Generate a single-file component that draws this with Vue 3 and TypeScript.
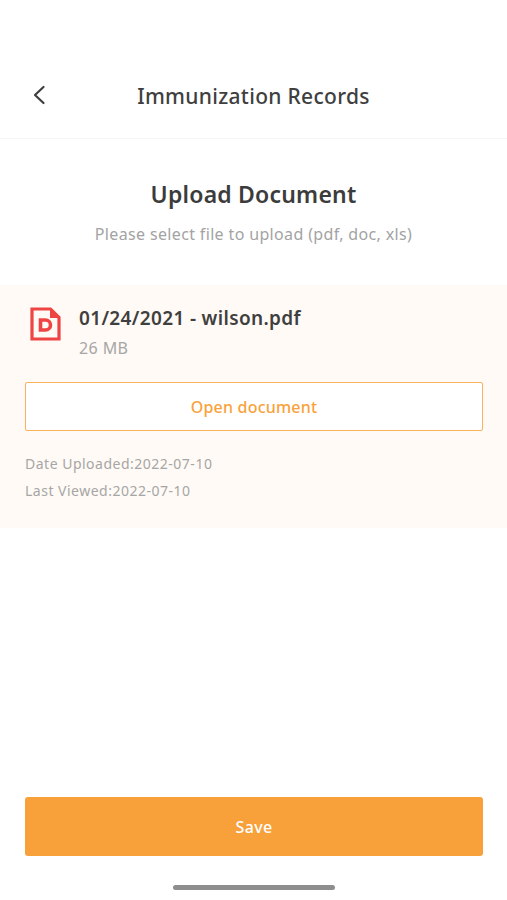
<script setup lang="ts">
const fileName = '01/24/2021 - wilson.pdf';
const fileSize = '26 MB';
const uploaded = '2022-07-10';
const viewed = '2022-07-10';
</script>

<template>
  <div class="page">
    <header class="top-bar">
      <svg class="back" width="14" height="20" viewBox="0 0 14 20" fill="none">
        <path d="M11.5 2 L3 10 L11.5 18" stroke="#3d3d3d" stroke-width="2.2" stroke-linecap="round" stroke-linejoin="round" />
      </svg>
      <span class="top-title">Immunization Records</span>
    </header>

    <section class="intro">
      <h1>Upload Document</h1>
      <p>Please select file to upload (pdf, doc, xls)</p>
    </section>

    <section class="doc-panel">
      <div class="doc-row">
        <svg class="doc-icon" width="31" height="34" viewBox="0 0 31 34" fill="none">
          <path d="M2 2 H20.5 L29 10.5 V32 H2 Z" stroke="#ef4444" stroke-width="3.2" stroke-linejoin="miter" />
          <path d="M20 1 L30 11 H20 Z" fill="#ef4444" />
          <path d="M10.5 13 H15.5 A5 5 0 0 1 15.5 23 H10.5 Z" stroke="#ef4444" stroke-width="3.6" stroke-linejoin="miter" />
        </svg>
        <div class="doc-info">
          <div class="doc-name">{{ fileName }}</div>
          <div class="doc-size">{{ fileSize }}</div>
        </div>
      </div>
      <button class="open-btn">Open document</button>
      <div class="meta">Date Uploaded:{{ uploaded }}</div>
      <div class="meta">Last Viewed:{{ viewed }}</div>
    </section>

    <div class="spacer"></div>

    <footer class="bottom">
      <button class="save-btn">Save</button>
      <div class="home-bar"></div>
    </footer>
  </div>
</template>

<style scoped>
.page {
  width: 507px;
  height: 900px;
  display: flex;
  flex-direction: column;
  background: #fff;
  font-family: "Noto Sans", Lato, sans-serif;
  overflow: hidden;
}

.top-bar {
  height: 139px;
  box-sizing: border-box;
  padding: 53px 0 0;
  border-bottom: 1px solid #f6f6f6;
  display: grid;
  grid-template-columns: 1fr auto 1fr;
  align-items: center;
}

.back {
  margin: -1px 0 0 32px;
}

.top-title {
  font-size: 21px;
  font-weight: 500;
  letter-spacing: 0.3px;
  color: #3f3f3f;
}

.intro {
  text-align: center;
  height: 146px;
  box-sizing: border-box;
  padding-top: 39px;
}

.intro h1 {
  margin: 0;
  font-size: 23px;
  line-height: 32px;
  font-weight: 600;
  letter-spacing: 0.2px;
  color: #3c3c3c;
}

.intro p {
  margin: 12px 0 0;
  font-size: 16px;
  line-height: 24px;
  letter-spacing: 0.35px;
  color: #a3a3a3;
}

.doc-panel {
  height: 243px;
  box-sizing: border-box;
  padding: 22px 24px 0 25px;
  background: #fffaf5;
}

.doc-row {
  display: flex;
  gap: 18px;
  padding-left: 5px;
  height: 75px;
}

.doc-icon {
  flex: none;
}

.doc-name {
  font-size: 19px;
  line-height: 22px;
  font-weight: 600;
  letter-spacing: 0.35px;
  color: #3f3f3f;
}

.doc-size {
  margin-top: 9px;
  font-size: 16px;
  line-height: 20px;
  letter-spacing: 0.4px;
  color: #a6a6a6;
}

.open-btn {
  display: block;
  width: 100%;
  height: 49px;
  box-sizing: border-box;
  background: #fff;
  border: 1.5px solid #f8b25c;
  border-radius: 2px;
  color: #f9a23b;
  font: inherit;
  font-size: 16px;
  font-weight: 500;
  letter-spacing: 0.2px;
  margin-bottom: 19px;
}

.meta {
  font-size: 14px;
  line-height: 27px;
  letter-spacing: 0.5px;
  color: #a6a6a6;
}

.spacer {
  flex: 1;
}

.bottom {
  padding: 0 24px 10px 25px;
}

.save-btn {
  display: block;
  width: 100%;
  height: 59px;
  border: none;
  border-radius: 3px;
  background: #f8a03a;
  color: #fff;
  font: inherit;
  font-size: 16px;
  font-weight: 500;
  letter-spacing: 0.3px;
}

.home-bar {
  width: 162px;
  height: 5px;
  margin: 29px auto 0;
  border-radius: 3px;
  background: #8e8e8e;
}
</style>
